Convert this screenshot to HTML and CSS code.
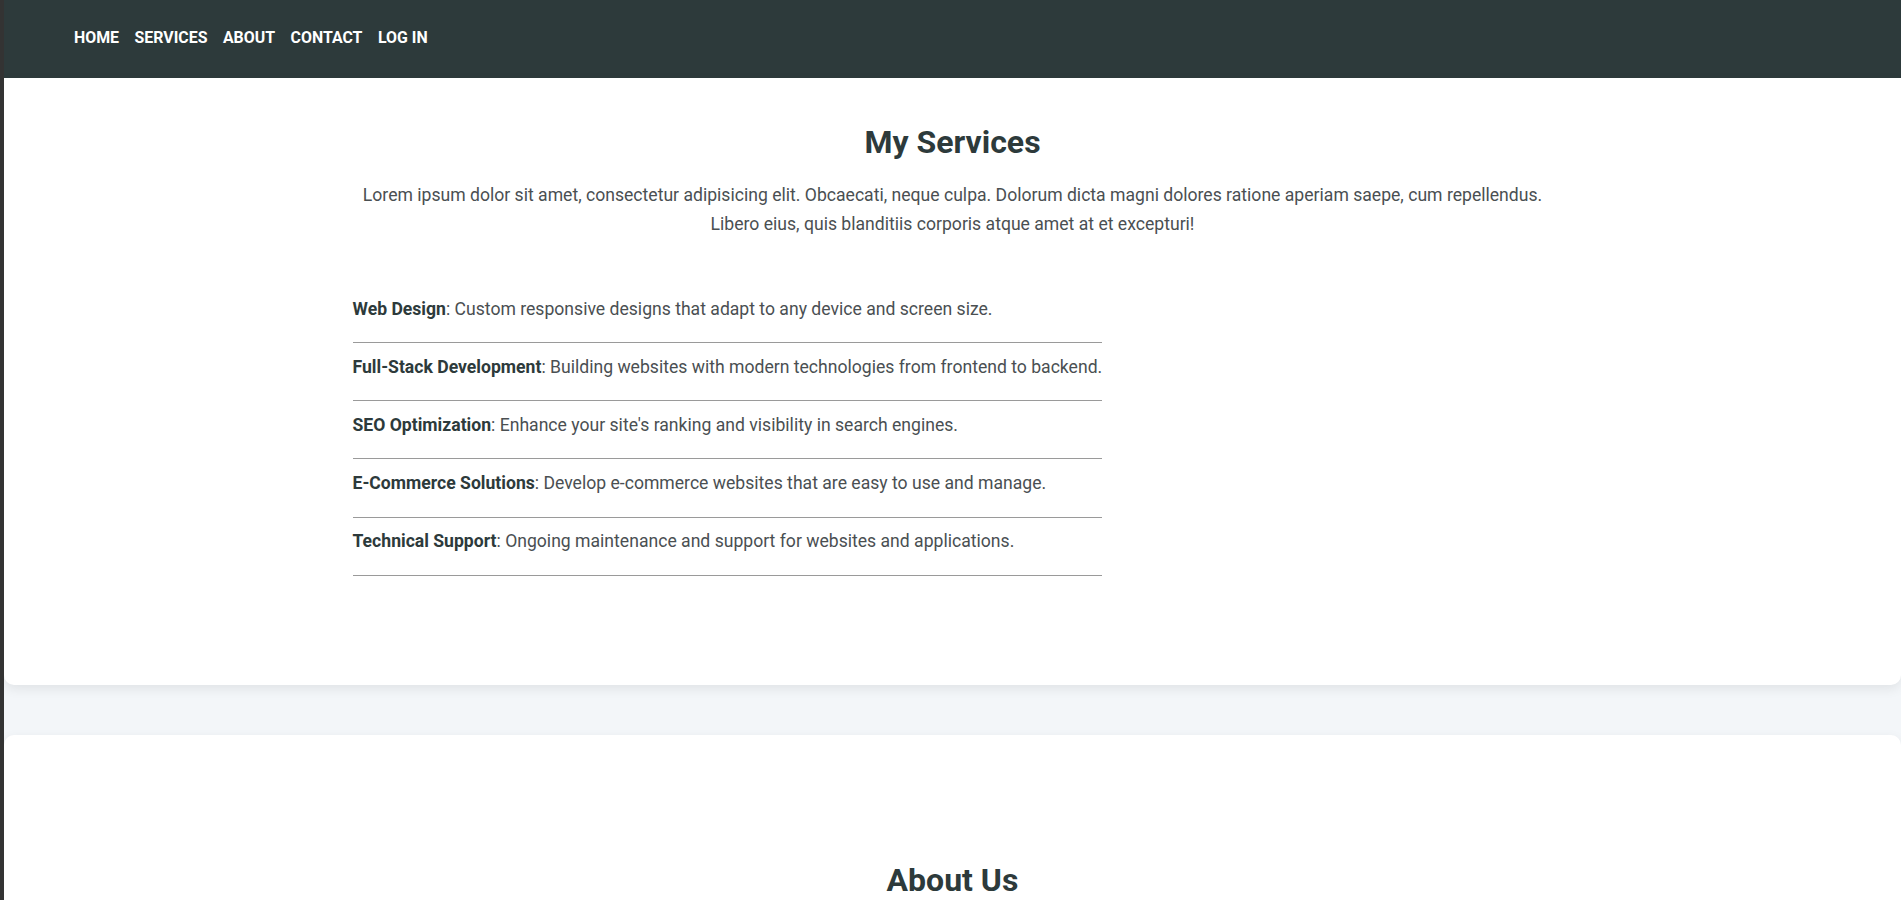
FILE: index.html
```html
<!DOCTYPE html>
<html lang="en">
<head>
<meta charset="utf-8">
<title>My Services</title>
<link rel="stylesheet" href="styles.css">
</head>
<body>
<header class="site-header">
  <nav class="nav">
    <a href="#" class="nav-link">Home</a>
    <a href="#" class="nav-link">Services</a>
    <a href="#" class="nav-link">About</a>
    <a href="#" class="nav-link">Contact</a>
    <a href="#" class="nav-link">Log in</a>
  </nav>
</header>
<main class="page">
  <section class="card services">
    <div class="container">
      <h2 class="section-title">My Services</h2>
      <p class="intro">Lorem ipsum dolor sit amet, consectetur adipisicing elit. Obcaecati, neque culpa. Dolorum dicta magni dolores ratione aperiam saepe, cum repellendus. Libero eius, quis blanditiis corporis atque amet at et excepturi!</p>
      <ul class="service-list">
        <li class="service-item"><strong>Web Design</strong>: Custom responsive designs that adapt to any device and screen size.</li>
        <li class="service-item"><strong>Full-Stack Development</strong>: Building websites with modern technologies from frontend to backend.</li>
        <li class="service-item"><strong>SEO Optimization</strong>: Enhance your site's ranking and visibility in search engines.</li>
        <li class="service-item"><strong>E-Commerce Solutions</strong>: Develop e-commerce websites that are easy to use and manage.</li>
        <li class="service-item"><strong>Technical Support</strong>: Ongoing maintenance and support for websites and applications.</li>
      </ul>
    </div>
  </section>
  <section class="card about">
    <div class="container">
      <h2 class="section-title">About Us</h2>
      <p class="intro">Lorem ipsum dolor sit amet, consectetur adipisicing elit. Obcaecati, neque culpa.</p>
    </div>
  </section>
</main>
</body>
</html>
```
FILE: styles.css
```css
* { box-sizing: border-box; }

html, body {
  margin: 0;
  padding: 0;
}

body {
  font-family: Roboto, "Liberation Sans", Arial, sans-serif;
  background: #f3f6f9;
  border-left: 4px solid #333333;
  color: #2d3a3b;
}

.site-header {
  background: #2d3a3b;
  height: 78px;
  display: flex;
  align-items: center;
  padding: 0 0 4px 70px;
}

.nav {
  display: flex;
  gap: 15.5px;
}

.nav-link {
  color: #ffffff;
  text-decoration: none;
  text-transform: uppercase;
  font-weight: 700;
  font-size: 15.9px;
}

.page {
  display: flex;
  flex-direction: column;
  gap: 50px;
}

.card {
  background: #ffffff;
  border-radius: 0 0 10px 10px;
  box-shadow: 0 4px 12px rgba(0, 0, 0, 0.08);
}

.card.about {
  border-radius: 10px 10px 0 0;
  min-height: 400px;
  padding-top: 126px;
}

.services {
  padding: 45px 0 109px;
}

.container {
  max-width: 1200px;
  margin: 0 auto;
}

.section-title {
  text-align: center;
  font-size: 32px;
  font-weight: 700;
  line-height: 38px;
  margin: 0 0 20px;
  color: #2d3a3b;
}

.intro {
  text-align: center;
  font-size: 17.6px;
  line-height: 29px;
  color: #4a4f52;
  margin: 0;
}

.service-list {
  list-style: none;
  padding: 0;
  margin: 46px 0 0;
  width: fit-content;
}

.service-item {
  font-size: 17.6px;
  line-height: 1.6;
  padding: 9.5px 0 19.5px;
  border-bottom: 1px solid #9a9a9a;
  color: #4a4f52;
}

.service-item strong {
  color: #2d3a3b;
  font-weight: 700;
}
```
